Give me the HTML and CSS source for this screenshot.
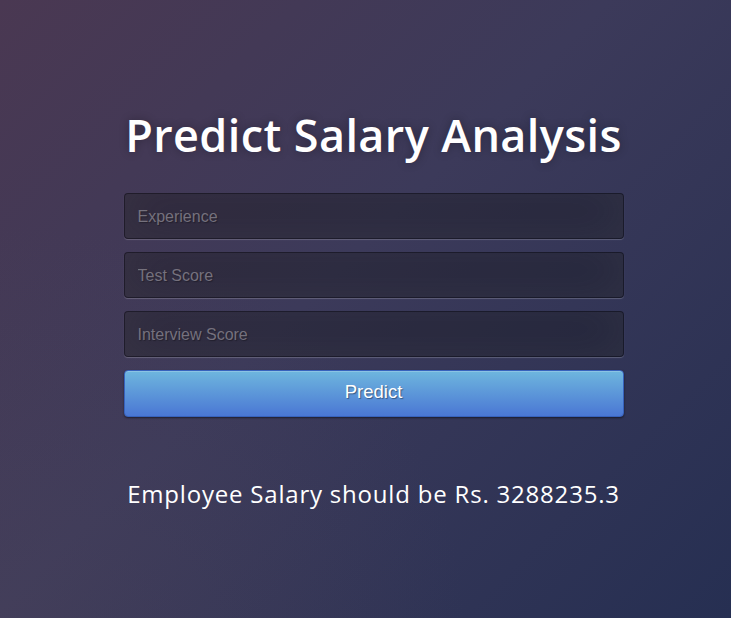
FILE: index.html
```html
<!DOCTYPE html>
<html>
<head>
<meta charset="utf-8">
<title>Predict Salary Analysis</title>
<link rel="stylesheet" href="styles.css">
</head>
<body>
<div class="page">
  <div class="login">
    <h1 class="title">Predict Salary Analysis</h1>
    <form class="form">
      <input class="field" type="text" placeholder="Experience">
      <input class="field" type="text" placeholder="Test Score">
      <input class="field" type="text" placeholder="Interview Score">
      <button class="btn" type="button">Predict</button>
    </form>
    <p class="result">Employee Salary should be Rs. 3288235.3</p>
  </div>
</div>
</body>
</html>
```
FILE: styles.css
```css
html, body {
  margin: 0;
  height: 100%;
}
body {
  background:
    radial-gradient(ellipse at 0% 100%, rgba(80,70,90,0.35) 0%, rgba(80,70,90,0) 45%),
    linear-gradient(135deg, #4a3852 0%, #3c3a5a 45%, #262f52 100%);
  font-family: "Open Sans", sans-serif;
  color: #fff;
  overflow: hidden;
}
.page {
  display: flex;
  justify-content: center;
  padding-top: 104px;
  padding-left: 16px;
}
.login {
  width: 500px;
  display: flex;
  flex-direction: column;
  align-items: stretch;
}
.title {
  margin: 0 -60px 27px;
  font-size: 45px;
  font-weight: 600;
  line-height: 62px;
  letter-spacing: 0.4px;
  text-align: center;
  white-space: nowrap;
  text-shadow: 0 0 10px rgba(0,0,0,0.3);
}
.form {
  display: flex;
  flex-direction: column;
  gap: 13px;
}
.field {
  box-sizing: border-box;
  height: 46px;
  width: 100%;
  margin: 0;
  padding: 2px 13px 0;
  font-family: "Liberation Sans", Arial, sans-serif;
  font-size: 16px;
  color: #fff;
  background: rgba(0,0,0,0.3);
  border: 1px solid rgba(0,0,0,0.3);
  border-radius: 4px;
  outline: none;
  box-shadow: inset 0 -5px 45px rgba(100,100,100,0.2), 0 1px 1px rgba(255,255,255,0.2);
  text-shadow: 1px 1px 1px rgba(0,0,0,0.3);
}
.field::placeholder {
  color: #75717d;
}
.btn {
  box-sizing: border-box;
  height: 47px;
  width: 100%;
  padding: 0 0 3px;
  font-family: "Liberation Sans", Arial, sans-serif;
  font-size: 18.5px;
  color: #fff;
  background: linear-gradient(to bottom, #6eb6de, #4a77d4);
  border: 1px solid #3762bc;
  border-radius: 4px;
  text-shadow: 1px 1px 1px rgba(0,0,0,0.4);
  box-shadow: inset 0 1px 0 rgba(255,255,255,0.2), 0 1px 2px rgba(0,0,0,0.5);
  cursor: pointer;
}
.result {
  margin: 62px -40px 0;
  font-size: 24px;
  letter-spacing: 0.8px;
  text-align: center;
  line-height: 30px;
  white-space: nowrap;
}
```
